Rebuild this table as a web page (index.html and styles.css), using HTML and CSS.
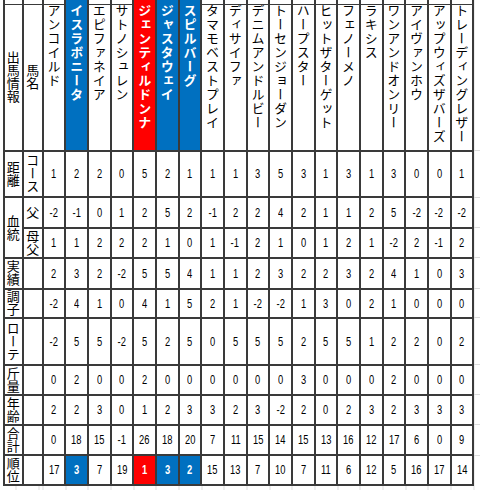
FILE: index.html
```html
<!DOCTYPE html>
<html lang="ja">
<head>
<meta charset="utf-8">
<title>出馬情報</title>
<link rel="stylesheet" href="styles.css">
</head>
<body>
<div class="sheet">
  <!-- stub row (top of sheet, partially visible) -->
  <div class="stub"></div><div class="stub"></div><div class="stub"></div>
  <div class="hd blue top"><span class="v nm">イスラボニータ</span></div>
  <div class="stub"></div><div class="stub"></div>
  <div class="hd red top"><span class="v nm">ジェンティルドンナ</span></div>
  <div class="hd blue top"><span class="v nm">ジャスタウェイ</span></div>
  <div class="hd blue top"><span class="v nm">スピルバーグ</span></div>
  <div class="stub"></div><div class="stub"></div><div class="stub"></div><div class="stub"></div>
  <div class="stub"></div><div class="stub"></div><div class="stub"></div><div class="stub"></div>
  <div class="stub"></div><div class="stub"></div><div class="stub"></div><div class="stub"></div>

  <!-- header row -->
  <div><span class="v">出馬情報</span></div>
  <div><span class="v">馬名</span></div>
  <div class="hd"><span class="v nm">アンコイルド</span></div>
  <div class="hd"><span class="v nm">エピファネイア</span></div>
  <div class="hd"><span class="v nm">サトノシュレン</span></div>
  <div class="hd"><span class="v nm">タマモベストプレイ</span></div>
  <div class="hd"><span class="v nm">ディサイファ</span></div>
  <div class="hd"><span class="v nm">デニムアンドルビー</span></div>
  <div class="hd"><span class="v nm">トーセンジョーダン</span></div>
  <div class="hd"><span class="v nm">ハープスター</span></div>
  <div class="hd"><span class="v nm">ヒットザターゲット</span></div>
  <div class="hd"><span class="v nm">フェノーメノ</span></div>
  <div class="hd"><span class="v nm">ラキシス</span></div>
  <div class="hd"><span class="v nm">ワンアンドオンリー</span></div>
  <div class="hd"><span class="v nm">アイヴァンホウ</span></div>
  <div class="hd"><span class="v nm">アップウィズザバーズ</span></div>
  <div class="hd"><span class="v nm">トレーディングレザー</span></div>

  <!-- 距離 / コース -->
  <div><span class="v">距離</span></div>
  <div><span class="v">コース</span></div>
  <div><span class="n">1</span></div><div><span class="n">2</span></div><div><span class="n">2</span></div><div><span class="n">0</span></div><div><span class="n">5</span></div><div><span class="n">2</span></div><div><span class="n">1</span></div><div><span class="n">1</span></div><div><span class="n">1</span></div><div><span class="n">3</span></div><div><span class="n">5</span></div><div><span class="n">3</span></div><div><span class="n">1</span></div><div><span class="n">3</span></div><div><span class="n">1</span></div><div><span class="n">3</span></div><div><span class="n">0</span></div><div><span class="n">0</span></div><div><span class="n">1</span></div>

  <!-- 血統 / 父 -->
  <div class="span2"><span class="v">血統</span></div>
  <div><span class="v">父</span></div>
  <div><span class="n">-2</span></div><div><span class="n">-1</span></div><div><span class="n">0</span></div><div><span class="n">1</span></div><div><span class="n">2</span></div><div><span class="n">5</span></div><div><span class="n">2</span></div><div><span class="n">-1</span></div><div><span class="n">2</span></div><div><span class="n">2</span></div><div><span class="n">4</span></div><div><span class="n">2</span></div><div><span class="n">1</span></div><div><span class="n">1</span></div><div><span class="n">2</span></div><div><span class="n">5</span></div><div><span class="n">-2</span></div><div><span class="n">-2</span></div><div><span class="n">-2</span></div>

  <!-- 母父 -->
  <div><span class="v">母父</span></div>
  <div><span class="n">1</span></div><div><span class="n">1</span></div><div><span class="n">2</span></div><div><span class="n">2</span></div><div><span class="n">2</span></div><div><span class="n">1</span></div><div><span class="n">0</span></div><div><span class="n">1</span></div><div><span class="n">-1</span></div><div><span class="n">2</span></div><div><span class="n">1</span></div><div><span class="n">0</span></div><div><span class="n">1</span></div><div><span class="n">2</span></div><div><span class="n">1</span></div><div><span class="n">-2</span></div><div><span class="n">2</span></div><div><span class="n">-1</span></div><div><span class="n">2</span></div>

  <!-- 実績 -->
  <div><span class="v">実績</span></div>
  <div></div>
  <div><span class="n">2</span></div><div><span class="n">3</span></div><div><span class="n">2</span></div><div><span class="n">-2</span></div><div><span class="n">5</span></div><div><span class="n">5</span></div><div><span class="n">4</span></div><div><span class="n">1</span></div><div><span class="n">1</span></div><div><span class="n">2</span></div><div><span class="n">3</span></div><div><span class="n">2</span></div><div><span class="n">2</span></div><div><span class="n">3</span></div><div><span class="n">2</span></div><div><span class="n">4</span></div><div><span class="n">1</span></div><div><span class="n">0</span></div><div><span class="n">3</span></div>

  <!-- 調子 -->
  <div><span class="v">調子</span></div>
  <div></div>
  <div><span class="n">-2</span></div><div><span class="n">4</span></div><div><span class="n">1</span></div><div><span class="n">0</span></div><div><span class="n">4</span></div><div><span class="n">1</span></div><div><span class="n">5</span></div><div><span class="n">2</span></div><div><span class="n">1</span></div><div><span class="n">-2</span></div><div><span class="n">-2</span></div><div><span class="n">1</span></div><div><span class="n">3</span></div><div><span class="n">0</span></div><div><span class="n">2</span></div><div><span class="n">1</span></div><div><span class="n">0</span></div><div><span class="n">0</span></div><div><span class="n">0</span></div>

  <!-- ローテ -->
  <div><span class="v">ローテ</span></div>
  <div></div>
  <div><span class="n">-2</span></div><div><span class="n">5</span></div><div><span class="n">5</span></div><div><span class="n">-2</span></div><div><span class="n">5</span></div><div><span class="n">2</span></div><div><span class="n">5</span></div><div><span class="n">0</span></div><div><span class="n">5</span></div><div><span class="n">5</span></div><div><span class="n">5</span></div><div><span class="n">2</span></div><div><span class="n">5</span></div><div><span class="n">5</span></div><div><span class="n">1</span></div><div><span class="n">2</span></div><div><span class="n">2</span></div><div><span class="n">0</span></div><div><span class="n">2</span></div>

  <!-- 斤量 -->
  <div><span class="v">斤量</span></div>
  <div></div>
  <div><span class="n">0</span></div><div><span class="n">2</span></div><div><span class="n">0</span></div><div><span class="n">0</span></div><div><span class="n">2</span></div><div><span class="n">0</span></div><div><span class="n">0</span></div><div><span class="n">0</span></div><div><span class="n">0</span></div><div><span class="n">0</span></div><div><span class="n">0</span></div><div><span class="n">3</span></div><div><span class="n">0</span></div><div><span class="n">0</span></div><div><span class="n">0</span></div><div><span class="n">2</span></div><div><span class="n">0</span></div><div><span class="n">0</span></div><div><span class="n">0</span></div>

  <!-- 年齢 -->
  <div><span class="v">年齢</span></div>
  <div></div>
  <div><span class="n">2</span></div><div><span class="n">2</span></div><div><span class="n">3</span></div><div><span class="n">0</span></div><div><span class="n">1</span></div><div><span class="n">2</span></div><div><span class="n">3</span></div><div><span class="n">3</span></div><div><span class="n">2</span></div><div><span class="n">3</span></div><div><span class="n">-2</span></div><div><span class="n">2</span></div><div><span class="n">0</span></div><div><span class="n">2</span></div><div><span class="n">3</span></div><div><span class="n">2</span></div><div><span class="n">3</span></div><div><span class="n">3</span></div><div><span class="n">3</span></div>

  <!-- 合計 -->
  <div><span class="v">合計</span></div>
  <div></div>
  <div><span class="n">0</span></div><div><span class="n">18</span></div><div><span class="n">15</span></div><div><span class="n">-1</span></div><div><span class="n">26</span></div><div><span class="n">18</span></div><div><span class="n">20</span></div><div><span class="n">7</span></div><div><span class="n">11</span></div><div><span class="n">15</span></div><div><span class="n">14</span></div><div><span class="n">15</span></div><div><span class="n">13</span></div><div><span class="n">16</span></div><div><span class="n">12</span></div><div><span class="n">17</span></div><div><span class="n">6</span></div><div><span class="n">0</span></div><div><span class="n">9</span></div>

  <!-- 順位 -->
  <div><span class="v">順位</span></div>
  <div></div>
  <div><span class="n">17</span></div><div class="blue"><span class="n">3</span></div><div><span class="n">7</span></div><div><span class="n">19</span></div><div class="red"><span class="n">1</span></div><div class="blue"><span class="n">3</span></div><div class="blue"><span class="n">2</span></div><div><span class="n">15</span></div><div><span class="n">13</span></div><div><span class="n">7</span></div><div><span class="n">10</span></div><div><span class="n">7</span></div><div><span class="n">11</span></div><div><span class="n">6</span></div><div><span class="n">12</span></div><div><span class="n">5</span></div><div><span class="n">16</span></div><div><span class="n">17</span></div><div><span class="n">14</span></div>
</div>
</body>
</html>
```

FILE: styles.css
```css
html {
  margin: 0;
  padding: 0;
  min-height: 100%;
  background-color: #ffffff;
  /* faint spreadsheet gridlines around the table */
  background-image:
    linear-gradient(to bottom,
      transparent 150px, #dcdcdc 150px 151px,
      transparent 151px 197px, #dcdcdc 197px 198px,
      transparent 198px 227px, #dcdcdc 227px 228px,
      transparent 228px 257px, #dcdcdc 257px 258px,
      transparent 258px 288px, #dcdcdc 288px 289px,
      transparent 289px 317px, #dcdcdc 317px 318px,
      transparent 318px 364px, #dcdcdc 364px 365px,
      transparent 365px 394px, #dcdcdc 394px 395px,
      transparent 395px 424px, #dcdcdc 424px 425px,
      transparent 425px 455px, #dcdcdc 455px 456px,
      transparent 456px),
    repeating-linear-gradient(to right, #dcdcdc 0 1px, transparent 1px 22.66px);
  background-size: 8px 490px, 100% 100%;
  background-position: right top, 42.5px 0;
  background-repeat: no-repeat, repeat;
}

body {
  margin: 0;
  padding: 0;
  font-family: "Noto Sans CJK JP", sans-serif;
  color: #000000;
}

.sheet {
  display: grid;
  grid-template-columns: 16.7px 18px repeat(19, 20.66px);
  grid-template-rows: 3px 144.7px 44.6px 28.7px 28px 28.7px 27.3px 44.7px 28px 28px 28.6px 27.4px;
  gap: 2px;
  padding: 0 2px 2px 2px;
  margin-left: 3px;
  width: max-content;
  background: #3a3a3a;
}

.sheet > div {
  background: #ffffff;
  display: flex;
  align-items: center;
  justify-content: center;
  overflow: hidden;
}

.sheet > .stub {
  margin-bottom: -1px;
}

.sheet > .hd {
  align-items: flex-start;
}

.sheet > .top {
  grid-row: span 2;
  padding-top: 5px;
}

.sheet > .span2 {
  grid-row: span 2;
}

.v {
  writing-mode: vertical-rl;
  line-height: 1;
  font-size: 13px;
  white-space: nowrap;
}

.nm {
  letter-spacing: 1px;
  margin-top: -1px;
}

.n {
  display: inline-block;
  font-family: "Liberation Sans", sans-serif;
  font-size: 13px;
  line-height: 1;
  transform: scaleX(0.72);
  white-space: nowrap;
}

.sheet > .blue {
  background: #0070c0;
  color: #ffffff;
  font-weight: bold;
}

.sheet > .red {
  background: #ff0000;
  color: #ffffff;
  font-weight: bold;
}
```
